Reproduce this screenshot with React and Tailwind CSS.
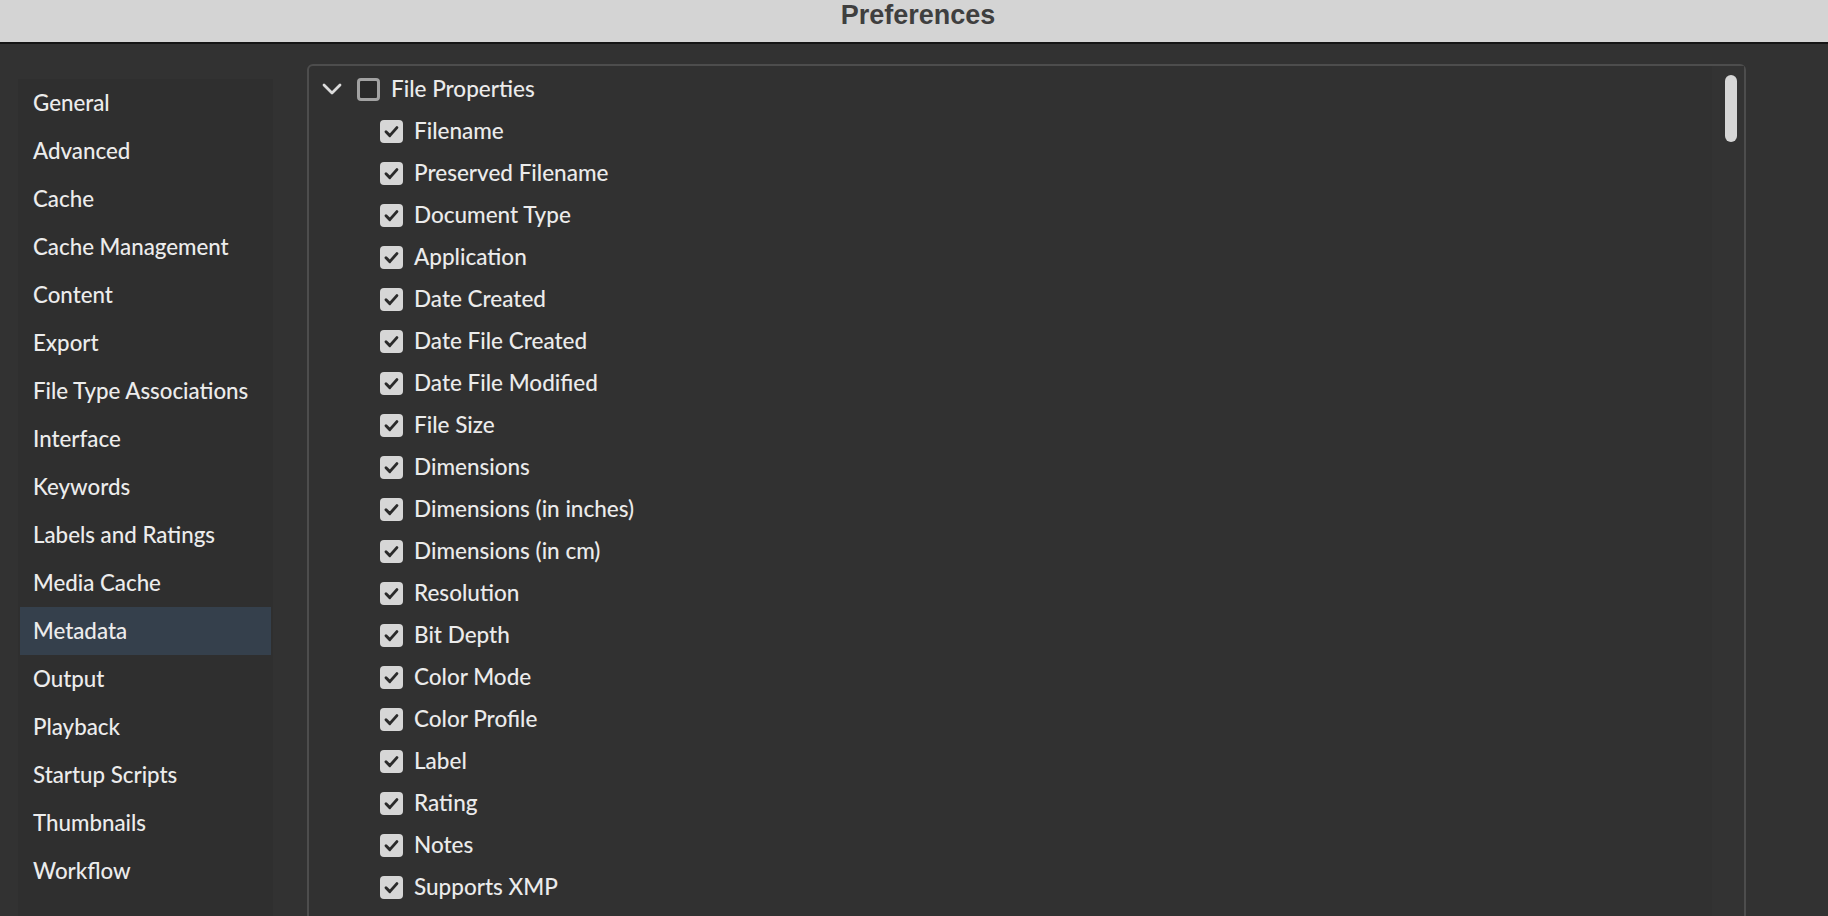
import React from "react";

const sections = [
  "General",
  "Advanced",
  "Cache",
  "Cache Management",
  "Content",
  "Export",
  "File Type Associations",
  "Interface",
  "Keywords",
  "Labels and Ratings",
  "Media Cache",
  "Metadata",
  "Output",
  "Playback",
  "Startup Scripts",
  "Thumbnails",
  "Workflow",
];

const fileProps = [
  "Filename",
  "Preserved Filename",
  "Document Type",
  "Application",
  "Date Created",
  "Date File Created",
  "Date File Modified",
  "File Size",
  "Dimensions",
  "Dimensions (in inches)",
  "Dimensions (in cm)",
  "Resolution",
  "Bit Depth",
  "Color Mode",
  "Color Profile",
  "Label",
  "Rating",
  "Notes",
  "Supports XMP",
];

function CheckBox({ checked }) {
  if (!checked) {
    return (
      <div className="w-[23px] h-[23px] shrink-0 rounded-[4px] border-[3px] border-[#a2a2a2] bg-[#2a2a2a]" />
    );
  }
  return (
    <div className="w-[23px] h-[23px] shrink-0 rounded-[4px] bg-[#d6d6d6] flex items-center justify-center">
      <svg width="23" height="23" viewBox="0 0 23 23">
        <path d="M6 11.8 L9.8 15.6 L16.9 7.6" fill="none" stroke="#2a2a2a" strokeWidth="2.9" strokeLinecap="round" strokeLinejoin="round" />
      </svg>
    </div>
  );
}

function Chevron() {
  return (
    <svg width="20" height="12" viewBox="0 0 20 12" className="shrink-0">
      <path d="M2 2 L10 10 L18 2" fill="none" stroke="#dcdcdc" strokeWidth="2.8" strokeLinecap="round" strokeLinejoin="round" />
    </svg>
  );
}

export default function App() {
  return (
    <div
      className="w-[1828px] h-[916px] overflow-hidden bg-[#323232] flex flex-col"
      style={{ fontFamily: "Lato, 'Noto Sans', sans-serif" }}
    >
      {/* title bar */}
      <div className="h-[44px] shrink-0 bg-[#d4d4d4] border-b-2 border-[#151515] flex justify-center pt-[1px] pl-[8px]">
        <span className="text-[27px] leading-[28px] font-bold text-[#3f3f3f] font-['Liberation_Sans',Arial,sans-serif]">
          Preferences
        </span>
      </div>

      <div className="flex flex-1 min-h-0">
        {/* sidebar */}
        <div className="ml-[18px] mt-[35px] w-[255px] bg-[#2f2f2f] flex flex-col px-[2px]">
          {sections.map((s) => (
            <div
              key={s}
              className={`h-[48px] shrink-0 flex items-center pl-[13px] text-[22.3px] font-medium text-[#ececec] ${
                s === "Metadata" ? "bg-[#35404c]" : ""
              }`}
            >
              {s}
            </div>
          ))}
        </div>

        {/* metadata list */}
        <div className="ml-[34px] mt-[20px] w-[1439px] h-[900px] shrink-0 rounded-[6px] border-2 border-[#4d4d4d] bg-[#313131] flex">
          <div className="flex-1 flex flex-col pt-[2px] pl-[13px]">
            <div className="h-[42px] flex items-center">
              <Chevron />
              <div className="ml-[15px]">
                <CheckBox checked={false} />
              </div>
              <span className="ml-[11px] text-[22.5px] font-medium text-[#ebebeb]">File Properties</span>
            </div>
            {fileProps.map((p) => (
              <div key={p} className="h-[42px] flex items-center pl-[58px]">
                <CheckBox checked />
                <span className="ml-[11px] text-[22.5px] font-medium text-[#ebebeb]">{p}</span>
              </div>
            ))}
          </div>
          <div className="w-[32px] bg-[#333333] flex justify-end pr-[7px] pt-[9px]">
            <div className="w-[12px] h-[67px] rounded-full bg-[#d6d6d6]" />
          </div>
        </div>
      </div>
    </div>
  );
}
